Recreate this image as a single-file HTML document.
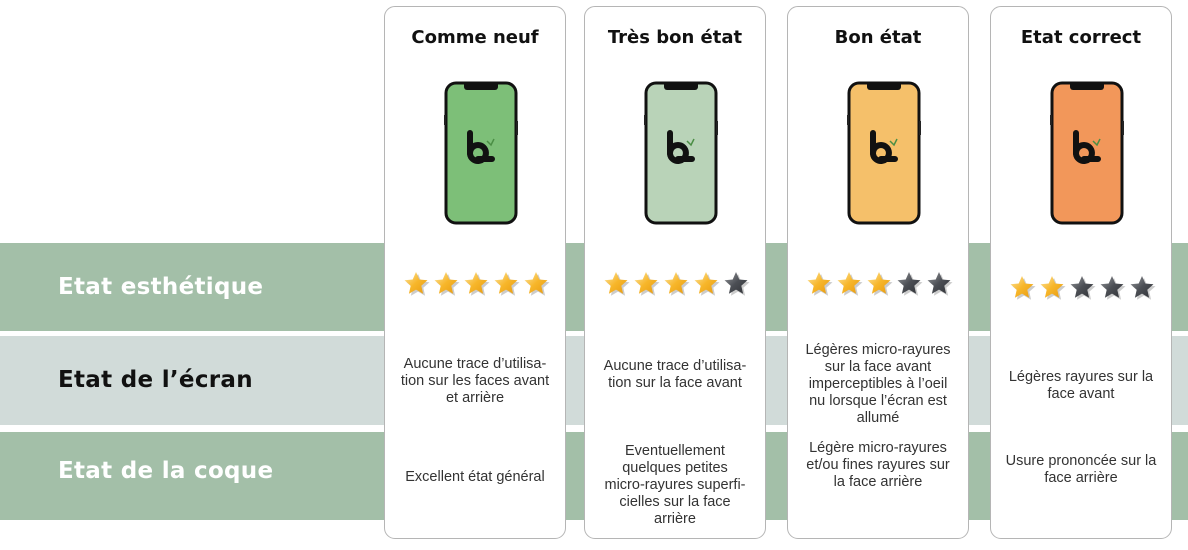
<!DOCTYPE html>
<html><head><meta charset="utf-8"><style>
*{margin:0;padding:0;box-sizing:border-box}
body{width:1188px;height:550px;background:#fff;position:relative;overflow:hidden;font-family:"Liberation Sans","DejaVu Sans",sans-serif}
.band{position:absolute;left:0;width:1188px}
.lab{position:absolute;left:58px;font-family:"DejaVu Sans",sans-serif;font-weight:bold;font-size:23px;letter-spacing:0.3px}
.card{position:absolute;top:6px;width:182px;height:533px;background:#fff;border:1px solid #b5b5b5;border-radius:11px}
.title{position:absolute;top:20px;left:0;right:0;text-align:center;font-family:"DejaVu Sans",sans-serif;font-weight:bold;font-size:18px;color:#111}
.phone{position:absolute;left:59px;top:74px}
.stars{position:absolute;left:14px;width:154px;height:30px;display:flex;justify-content:center;gap:2px}
.t{position:absolute;left:2px;right:2px;display:flex;align-items:center;justify-content:center;text-align:center;font-size:14.5px;line-height:17px;color:#333}
</style></head><body>
<div class="band" style="top:243px;height:88px;background:#a3bfa8"></div>
<div class="band" style="top:336px;height:89px;background:#d1dbd9"></div>
<div class="band" style="top:432px;height:88px;background:#a3bfa8"></div>
<div class="lab" style="top:274px;color:#fff">Etat esthétique</div>
<div class="lab" style="top:367px;color:#111">Etat de l’écran</div>
<div class="lab" style="top:458px;color:#fff">Etat de la coque</div>

<svg width="0" height="0" style="position:absolute">
<defs>
<linearGradient id="gy" x1="0" y1="0" x2="1" y2="1"><stop offset="0" stop-color="#fde7a6"/><stop offset="0.5" stop-color="#f7b62a"/><stop offset="1" stop-color="#e79a10"/></linearGradient>
<linearGradient id="gd" x1="0" y1="0" x2="1" y2="1"><stop offset="0" stop-color="#9a9ca0"/><stop offset="0.5" stop-color="#4b4e54"/><stop offset="1" stop-color="#2f3136"/></linearGradient>
</defs></svg>

<div class="card" style="left:384px">
<div class="title">Comme neuf</div>
<div class="phone"><svg width="74" height="146"><rect x="2" y="2" width="70" height="140" rx="10" fill="#7dbf78" stroke="#111" stroke-width="3"/><rect x="0" y="34" width="2" height="10" fill="#222"/><rect x="72" y="40" width="2" height="14" fill="#222"/><path d="M20 3 h34 v3 a3 3 0 0 1 -3 3 h-28 a3 3 0 0 1 -3 -3z" fill="#111"/><path d="M26 52 v21 a8 8 0 1 0 8 -9 a8 8 0 0 0 -8 8 M34 78 h14" fill="none" stroke="#111" stroke-width="6" stroke-linecap="round"/><path d="M43 60 l4 4 l3 -6" stroke="#4b8e45" stroke-width="1.5" fill="none"/></svg></div>
<div class="stars" style="top:263px"></div>
<div class="t" style="top:330px;height:89px">Aucune trace d’utilisa-<br>tion sur les faces avant<br>et arrière</div>
<div class="t" style="top:426px;height:88px">Excellent état général</div>
</div>

<div class="card" style="left:584px">
<div class="title">Très bon état</div>
<div class="phone"><svg width="74" height="146"><rect x="2" y="2" width="70" height="140" rx="10" fill="#b9d3b8" stroke="#111" stroke-width="3"/><rect x="0" y="34" width="2" height="10" fill="#222"/><rect x="72" y="40" width="2" height="14" fill="#222"/><path d="M20 3 h34 v3 a3 3 0 0 1 -3 3 h-28 a3 3 0 0 1 -3 -3z" fill="#111"/><path d="M26 52 v21 a8 8 0 1 0 8 -9 a8 8 0 0 0 -8 8 M34 78 h14" fill="none" stroke="#111" stroke-width="6" stroke-linecap="round"/><path d="M43 60 l4 4 l3 -6" stroke="#4b8e45" stroke-width="1.5" fill="none"/></svg></div>
<div class="stars" style="top:263px"></div>
<div class="t" style="top:330px;height:89px;padding-bottom:14px">Aucune trace d’utilisa-<br>tion sur la face avant</div>
<div class="t" style="top:434px;height:88px">Eventuellement<br>quelques petites<br>micro-rayures superfi-<br>cielles sur la face<br>arrière</div>
</div>

<div class="card" style="left:787px">
<div class="title">Bon état</div>
<div class="phone"><svg width="74" height="146"><rect x="2" y="2" width="70" height="140" rx="10" fill="#f5c06a" stroke="#111" stroke-width="3"/><rect x="0" y="34" width="2" height="10" fill="#222"/><rect x="72" y="40" width="2" height="14" fill="#222"/><path d="M20 3 h34 v3 a3 3 0 0 1 -3 3 h-28 a3 3 0 0 1 -3 -3z" fill="#111"/><path d="M26 52 v21 a8 8 0 1 0 8 -9 a8 8 0 0 0 -8 8 M34 78 h14" fill="none" stroke="#111" stroke-width="6" stroke-linecap="round"/><path d="M43 60 l4 4 l3 -6" stroke="#4b8e45" stroke-width="1.5" fill="none"/></svg></div>
<div class="stars" style="top:263px"></div>
<div class="t" style="top:333px;height:89px">Légères micro-rayures<br>sur la face avant<br>imperceptibles à l’oeil<br>nu lorsque l’écran est<br>allumé</div>
<div class="t" style="top:426px;height:88px;padding-bottom:24px">Légère micro-rayures<br>et/ou fines rayures sur<br>la face arrière</div>
</div>

<div class="card" style="left:990px">
<div class="title">Etat correct</div>
<div class="phone"><svg width="74" height="146"><rect x="2" y="2" width="70" height="140" rx="10" fill="#f2975a" stroke="#111" stroke-width="3"/><rect x="0" y="34" width="2" height="10" fill="#222"/><rect x="72" y="40" width="2" height="14" fill="#222"/><path d="M20 3 h34 v3 a3 3 0 0 1 -3 3 h-28 a3 3 0 0 1 -3 -3z" fill="#111"/><path d="M26 52 v21 a8 8 0 1 0 8 -9 a8 8 0 0 0 -8 8 M34 78 h14" fill="none" stroke="#111" stroke-width="6" stroke-linecap="round"/><path d="M43 60 l4 4 l3 -6" stroke="#4b8e45" stroke-width="1.5" fill="none"/></svg></div>
<div class="stars" style="top:267px"></div>
<div class="t" style="top:334px;height:89px">Légères rayures sur la<br>face avant</div>
<div class="t" style="top:426px;height:88px;padding-bottom:14px">Usure prononcée sur la<br>face arrière</div>
</div>

<script>
var counts=[5,4,3,2];
var star='<svg width="28" height="28" viewBox="0 0 28 28"><polygon points="15,3 18.3,10.5 26.5,11.3 20.3,16.8 22.1,24.8 15,20.6 7.9,24.8 9.7,16.8 3.5,11.3 11.7,10.5" fill="#999" opacity="0.5" transform="translate(1,1)"/><polygon points="14,2 17.3,9.5 25.5,10.3 19.3,15.8 21.1,23.8 14,19.6 6.9,23.8 8.7,15.8 2.5,10.3 10.7,9.5" fill="url(#G)"/></svg>';
document.querySelectorAll('.stars').forEach(function(s,i){var h='';for(var k=0;k<5;k++)h+=star.replace('G',k<counts[i]?'gy':'gd');s.innerHTML=h;});
</script>
</body></html>
